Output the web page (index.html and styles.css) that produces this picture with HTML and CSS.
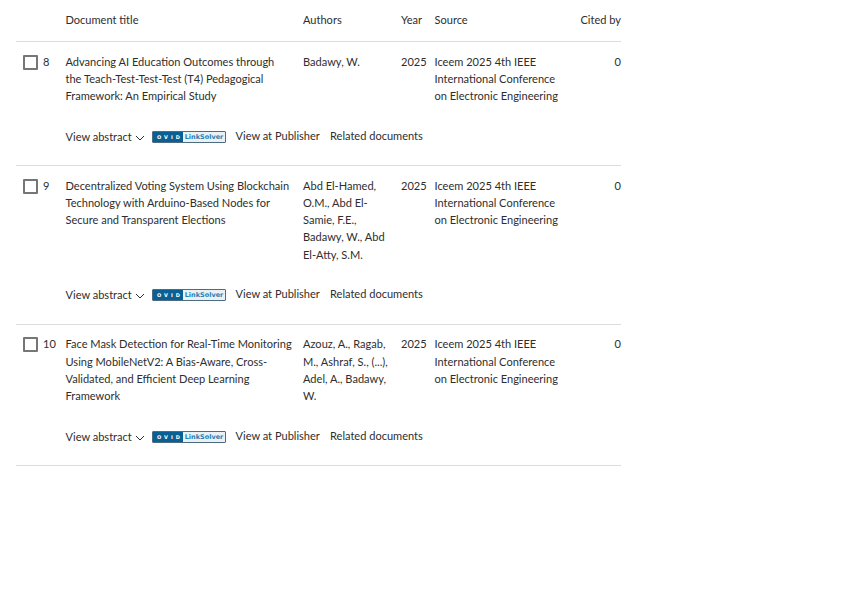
FILE: index.html
```html
<!DOCTYPE html>
<html lang="en">
<head>
<meta charset="utf-8">
<title>Documents</title>
<link rel="stylesheet" href="styles.css">
</head>
<body>
<table class="results">
  <colgroup>
    <col class="c-check"><col class="c-title"><col class="c-authors"><col class="c-year"><col class="c-source"><col class="c-cited">
  </colgroup>
  <thead>
    <tr><th></th><th>Document title</th><th>Authors</th><th>Year</th><th>Source</th><th class="cited">Cited by</th></tr>
  </thead>
  <tbody>
    <tr class="main">
      <td><div class="sel"><span class="box"></span><span class="num">8</span></div></td>
      <td>Advancing AI Education Outcomes through the Teach-Test-Test-Test (T4) Pedagogical Framework: An Empirical Study</td>
      <td>Badawy, W.</td>
      <td>2025</td>
      <td>Iceem 2025 4th IEEE International Conference on Electronic Engineering</td>
      <td class="cited">0</td>
    </tr>
    <tr class="actions">
      <td></td>
      <td colspan="5"><div class="links">
        <span class="abs">View abstract <svg class="chev" viewBox="0 0 10 6" width="10" height="6"><path d="M1 1l4 4 4-4" fill="none" stroke="#2e2e2e" stroke-width="1"/></svg></span>
        <span class="ovid"><span class="ovid-l">OVID</span><span class="ovid-r">LinkSolver</span></span>
        <span class="pub">View at Publisher</span><span class="rel">Related documents</span>
      </div></td>
    </tr>
    <tr class="main">
      <td><div class="sel"><span class="box"></span><span class="num">9</span></div></td>
      <td>Decentralized Voting System Using Blockchain Technology with Arduino-Based Nodes for Secure and Transparent Elections</td>
      <td>Abd El-Hamed, O.M., Abd El-Samie, F.E., Badawy, W., Abd El-Atty, S.M.</td>
      <td>2025</td>
      <td>Iceem 2025 4th IEEE International Conference on Electronic Engineering</td>
      <td class="cited">0</td>
    </tr>
    <tr class="actions">
      <td></td>
      <td colspan="5"><div class="links">
        <span class="abs">View abstract <svg class="chev" viewBox="0 0 10 6" width="10" height="6"><path d="M1 1l4 4 4-4" fill="none" stroke="#2e2e2e" stroke-width="1"/></svg></span>
        <span class="ovid"><span class="ovid-l">OVID</span><span class="ovid-r">LinkSolver</span></span>
        <span class="pub">View at Publisher</span><span class="rel">Related documents</span>
      </div></td>
    </tr>
    <tr class="main">
      <td><div class="sel"><span class="box"></span><span class="num">10</span></div></td>
      <td>Face Mask Detection for Real-Time Monitoring Using MobileNetV2: A Bias-Aware, Cross-Validated, and Efficient Deep Learning Framework</td>
      <td>Azouz, A., Ragab, M., Ashraf, S., (...), Adel, A., Badawy, W.</td>
      <td>2025</td>
      <td>Iceem 2025 4th IEEE International Conference on Electronic Engineering</td>
      <td class="cited">0</td>
    </tr>
    <tr class="actions">
      <td></td>
      <td colspan="5"><div class="links">
        <span class="abs">View abstract <svg class="chev" viewBox="0 0 10 6" width="10" height="6"><path d="M1 1l4 4 4-4" fill="none" stroke="#2e2e2e" stroke-width="1"/></svg></span>
        <span class="ovid"><span class="ovid-l">OVID</span><span class="ovid-r">LinkSolver</span></span>
        <span class="pub">View at Publisher</span><span class="rel">Related documents</span>
      </div></td>
    </tr>
  </tbody>
</table>
</body>
</html>
```
FILE: styles.css
```css
html, body { margin: 0; background: #fff; }
body { padding: 0 0 0 16px; font-family: Lato, sans-serif; font-size: 11.05px; line-height: 17.25px; color: #2e2e2e; }
.results { border-collapse: collapse; table-layout: fixed; width: 605px; }
.c-check { width: 49.5px; }
.c-title { width: 237.5px; }
.c-authors { width: 98px; }
.c-year { width: 33.5px; }
.c-source { width: 135px; }
.c-cited { width: 51.5px; }
th { font-weight: 400; text-align: left; padding: 11px 0 12px; height: 18px; border-bottom: 1px solid #dcdcdc; vertical-align: top; }
td { padding: 0; vertical-align: top; }
.main td { padding-top: 10.7px; padding-right: 8px; }
.main td:nth-child(2) { padding-right: 10.5px; }
.main td.cited, th.cited { padding-right: 0; }
.cited { text-align: right; }
.actions td { padding-top: 23.5px; padding-bottom: 19.1px; border-bottom: 1px solid #dcdcdc; height: 18px; }
.sel { display: flex; align-items: flex-start; padding-left: 7px; gap: 5px; }
.box { width: 11px; height: 11px; border: 2px solid #767676; border-radius: 1px; margin-top: 2px; flex: none; }
.links { display: flex; align-items: flex-start; height: 18px; }
.abs { width: 86.5px; white-space: nowrap; }
.chev { margin-left: 0; }
.ovid { display: flex; width: 72px; height: 10px; border: 1px solid #4f6b80; border-radius: 1px; margin: 3px 9.5px 0 0; font-family: "DejaVu Sans", sans-serif; font-size: 7px; line-height: 10px; font-weight: 700; overflow: hidden; flex: none; }
.ovid-l { width: 30px; background: #0a5f94; color: #fff; letter-spacing: 3px; padding-left: 4px; box-sizing: border-box; font-size: 5px; }
.ovid-r { flex: 1; color: #2a7fb0; background: #e8f1f6; text-align: center; font-size: 6.5px; }
.pub, .rel { margin-top: -1px; white-space: nowrap; }
.pub { width: 94.5px; }
```
